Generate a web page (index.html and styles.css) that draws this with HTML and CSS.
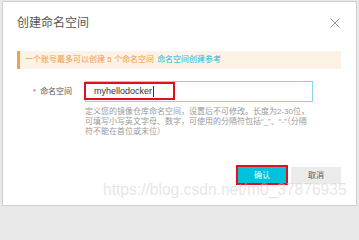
FILE: index.html
```html
<!DOCTYPE html>
<html lang="zh-CN">
<head>
<meta charset="utf-8">
<title>创建命名空间</title>
<link rel="stylesheet" href="styles.css">
</head>
<body>
<div class="screen">
  <div class="dialog">
    <div class="head">
      <h2 class="title">创建命名空间</h2>
      <button class="close" aria-label="关闭">
        <svg width="10" height="10" viewBox="0 0 10 10"><path d="M0.5 0.5 L9.5 9.5 M9.5 0.5 L0.5 9.5" stroke="#9a9a9a" stroke-width="1" fill="none"/></svg>
      </button>
    </div>
    <div class="body">
      <div class="notice">一个账号最多可以创建 5 个命名空间 <a class="link">命名空间创建参考</a></div>
      <div class="form-row">
        <label class="label"><span class="req">*</span>命名空间</label>
        <div class="field">
          <div class="input-wrap">
            <div class="input">myhellodocker<span class="caret"></span></div>
            <span class="mark mark-input"></span>
          </div>
          <p class="help">定义您的镜像仓库命名空间，设置后不可修改。长度为2-30位，<br>可填写小写英文字母、数字，可使用的分隔符包括“_”、“-”（分隔<br>符不能在首位或末位）</p>
        </div>
      </div>
    </div>
    <div class="foot">
      <div class="btn-wrap">
        <button class="btn primary">确认</button>
        <span class="mark mark-btn"></span>
      </div>
      <button class="btn">取消</button>
    </div>
    <div class="watermark">https://blog.csdn.net/m0_37876935</div>
  </div>
</div>
</body>
</html>
```
FILE: styles.css
```css
html, body {
  margin: 0;
  padding: 0;
  background: #e9e9e9;
}
body {
  font-family: "Liberation Sans", "Noto Sans CJK SC", sans-serif;
}
.screen {
  width: 359px;
  height: 208px;
  padding: 1px 0 0 2px;
  box-sizing: border-box;
  overflow: hidden;
}
.dialog {
  position: relative;
  width: 355px;
  height: 205px;
  box-sizing: border-box;
  background: #fff;
  border: 1px solid #cfcfcf;
  display: flex;
  flex-direction: column;
  overflow: hidden;
}
.head {
  display: flex;
  align-items: center;
  justify-content: space-between;
  padding: 13px 16px 0 14px;
  height: 16px;
}
.title {
  margin: 0;
  font-size: 12px;
  line-height: 16px;
  font-weight: normal;
  color: #555;
}
.close {
  border: 0;
  padding: 0;
  background: none;
  width: 10px;
  height: 10px;
  display: flex;
}
.body {
  padding: 20px 15px 0 14px;
}
.notice {
  height: 18px;
  line-height: 18px;
  background: #fdf2e6;
  border-left: 3px solid #f5a04a;
  padding-left: 5px;
  font-size: 8px;
  color: #f29a44;
  white-space: nowrap;
}
.link {
  color: #22b8d6;
  margin-left: 1px;
}
.form-row {
  display: flex;
  margin-top: 12px;
}
.label {
  width: 52px;
  padding-left: 16px;
  height: 21px;
  line-height: 21px;
  font-size: 8px;
  color: #555;
  white-space: nowrap;
}
.req {
  color: #e8434a;
  margin-right: 4px;
  font-size: 8px;
}
.field {
  width: 228px;
}
.input-wrap {
  position: relative;
}
.input {
  height: 21px;
  box-sizing: border-box;
  border: 1px solid #86d6e6;
  padding-left: 8px;
  font-size: 9px;
  line-height: 19px;
  color: #333;
  display: flex;
  align-items: center;
}
.caret {
  display: inline-block;
  width: 1px;
  height: 11px;
  background: #333;
  margin-left: 1px;
}
.mark {
  position: absolute;
  border: 2px solid #e3101b;
  box-sizing: border-box;
  pointer-events: none;
}
.mark-input {
  left: -1px;
  top: 1px;
  width: 91px;
  height: 18px;
}
.help {
  margin: 5px 0 0;
  font-size: 8px;
  line-height: 10px;
  color: #999;
  white-space: nowrap;
}
.foot {
  margin-top: auto;
  display: flex;
  justify-content: flex-end;
  gap: 4px;
  padding: 0 15px 21px 0;
}
.btn-wrap {
  position: relative;
  display: flex;
}
.btn {
  width: 50px;
  height: 17px;
  border: 0;
  padding: 0;
  font-family: "Liberation Sans", "Noto Sans CJK SC", sans-serif;
  font-size: 8px;
  line-height: 17px;
  background: #ebebeb;
  color: #555;
}
.btn.primary {
  background: #00c1de;
  color: #fff;
}
.mark-btn {
  left: -1px;
  top: -2px;
  width: 52px;
  height: 20px;
}
.watermark {
  position: absolute;
  left: 100px;
  top: 180px;
  font-family: "Liberation Sans", sans-serif;
  font-size: 15.6px;
  line-height: 16px;
  color: rgba(205, 205, 205, 0.5);
  white-space: nowrap;
  pointer-events: none;
}
```
